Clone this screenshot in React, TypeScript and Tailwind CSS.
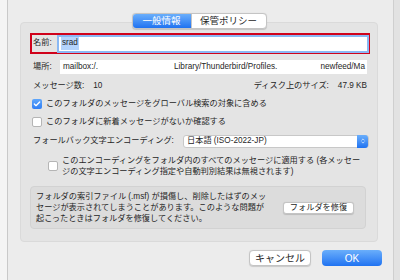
import { Check, ChevronUp, ChevronDown } from 'lucide-react';

const font = { fontFamily: '"Liberation Sans", "Noto Sans CJK JP", sans-serif' };

function Checkbox({ checked }: { checked?: boolean }) {
  return checked ? (
    <span className="flex h-[10px] w-[10px] shrink-0 items-center justify-center rounded-[2px] bg-gradient-to-b from-[#5fa6fa] to-[#2f7ef5]">
      <Check className="h-[8px] w-[8px] text-white" strokeWidth={4} />
    </span>
  ) : (
    <span className="h-[10px] w-[10px] shrink-0 rounded-[2px] border border-[#b5b5b5] bg-white" />
  );
}

export default function App() {
  return (
    <div className="flex h-[280px] w-[400px] overflow-hidden text-[8.2px] text-[#262626]" style={font}>
      {/* background window on the left */}
      <div className="w-[8px] shrink-0 border-r border-[#c9c9c9] bg-[#f4f4f4]" />

      <div className="flex flex-1 flex-col bg-[#ececec]">
        <div className="ml-[12px] mt-[13px] flex w-[358px] flex-col items-center">
          {/* Tabs */}
          <div className="relative z-10 flex h-[16px] overflow-hidden rounded-[4px] border border-[#c4c4c4] bg-white text-[9.5px] shadow-[0_0.5px_1px_rgba(0,0,0,0.15)]">
            <div className="flex w-[58px] items-center justify-center bg-gradient-to-b from-[#6aaefb] to-[#1e72f1] text-white">一般情報</div>
            <div className="flex w-[75px] items-center justify-center border-l border-[#c4c4c4]">保管ポリシー</div>
          </div>

          {/* Group box */}
          <div className="-mt-[7px] flex h-[220px] w-full flex-col rounded-[4px] border border-[#dadada] bg-[#e4e4e4] pl-[9px] pr-[7px] pt-[10px]">
            {/* Name, focused */}
            <div className="flex h-[21px] items-center gap-[5px] border-2 border-[#d0021b] pl-[1px] pr-[1px]">
              <span className="w-[21px]">名前:</span>
              <div className="flex h-[14px] flex-1 items-center bg-white pl-[2px] shadow-[0_0_0_2px_#8ab8f4]">
                <span className="bg-[#b4d4fd] px-[1px]">srad</span>
              </div>
            </div>

            {/* Location */}
            <div className="mt-[6px] flex h-[14px] items-center gap-[6px] pl-[3px] pr-[3px]">
              <span className="w-[21px]">場所:</span>
              <div className="flex h-[14px] flex-1 items-center overflow-hidden whitespace-nowrap bg-white pl-[3px] pr-[2px]">
                <span className="w-[111px] shrink-0">mailbox:/.</span>
                <span>Library/Thunderbird/Profiles.</span>
                <span className="ml-auto">newfeed/Ma</span>
              </div>
            </div>

            {/* Counts */}
            <div className="mt-[6px] flex h-[12px] items-center justify-between pl-[3px] pr-[3px]">
              <span>
                メッセージ数:<span className="ml-[9px]">10</span>
              </span>
              <span>
                ディスク上のサイズ:<span className="ml-[9px]">47.9 KB</span>
              </span>
            </div>

            <div className="mt-[6px] flex h-[12px] items-center gap-[4px] pl-[2px]">
              <Checkbox checked />
              <span>このフォルダのメッセージをグローバル検索の対象に含める</span>
            </div>

            <div className="mt-[6px] flex h-[12px] items-center gap-[4px] pl-[2px]">
              <Checkbox />
              <span>このフォルダに新着メッセージがないか確認する</span>
            </div>

            {/* Fallback encoding */}
            <div className="mt-[6px] flex h-[14px] items-center pl-[3px] pr-[1px]">
              <span className="w-[150px]">フォールバック文字エンコーディング:</span>
              <div className="flex h-[13px] flex-1 items-center justify-between rounded-[3px] border border-[#c8c8c8] bg-white pl-[3px]">
                <span>日本語 (ISO-2022-JP)</span>
                <span className="flex h-[13px] w-[11px] flex-col items-center justify-center rounded-r-[3px] bg-gradient-to-b from-[#6aaefb] to-[#1e72f1] text-white">
                  <ChevronUp className="-mb-[2px] h-[5px] w-[6px]" strokeWidth={3} />
                  <ChevronDown className="h-[5px] w-[6px]" strokeWidth={3} />
                </span>
              </div>
            </div>

            {/* Apply to all */}
            <div className="mt-[7px] flex items-center gap-[4px] whitespace-nowrap pl-[18px] leading-[11px]">
              <Checkbox />
              <span>
                このエンコーディングをフォルダ内のすべてのメッセージに適用する (各メッセー
                <br />
                ジの文字エンコーディング指定や自動判別結果は無視されます)
              </span>
            </div>

            {/* Repair info */}
            <div className="mt-[9px] mr-[4px] flex h-[43px] items-center justify-between rounded-[4px] border border-[#d2d2d2] bg-[#dcdcdc] pl-[5px] pr-[11px] leading-[11px]">
              <span className="whitespace-nowrap">
                フォルダの索引ファイル (.msf) が損傷し、削除したはずのメッ
                <br />
                セージが表示されてしまうことがあります。このような問題が
                <br />
                起こったときはフォルダを修復してください。
              </span>
              <button className="flex h-[12px] w-[71px] items-center justify-center rounded-[3px] border border-[#c4c4c4] bg-white shadow-[0_0.5px_1px_rgba(0,0,0,0.15)]">
                フォルダを修復
              </button>
            </div>
          </div>
        </div>

        {/* Dialog buttons */}
        <div className="mr-[11px] mt-[8px] flex justify-end gap-[11px] text-[10px]">
          <button className="flex h-[16px] w-[62px] items-center justify-center rounded-[4px] border border-[#c4c4c4] bg-white shadow-[0_0.5px_1px_rgba(0,0,0,0.15)]">
            キャンセル
          </button>
          <button className="flex h-[16px] w-[60px] items-center justify-center rounded-[4px] bg-gradient-to-b from-[#6aaefb] to-[#1e72f1] text-white">
            OK
          </button>
        </div>
      </div>

      {/* background window on the right */}
      <div className="w-[7px] shrink-0 border-l border-[#cfcfcf] bg-[#e2e2e2]" />
    </div>
  );
}
